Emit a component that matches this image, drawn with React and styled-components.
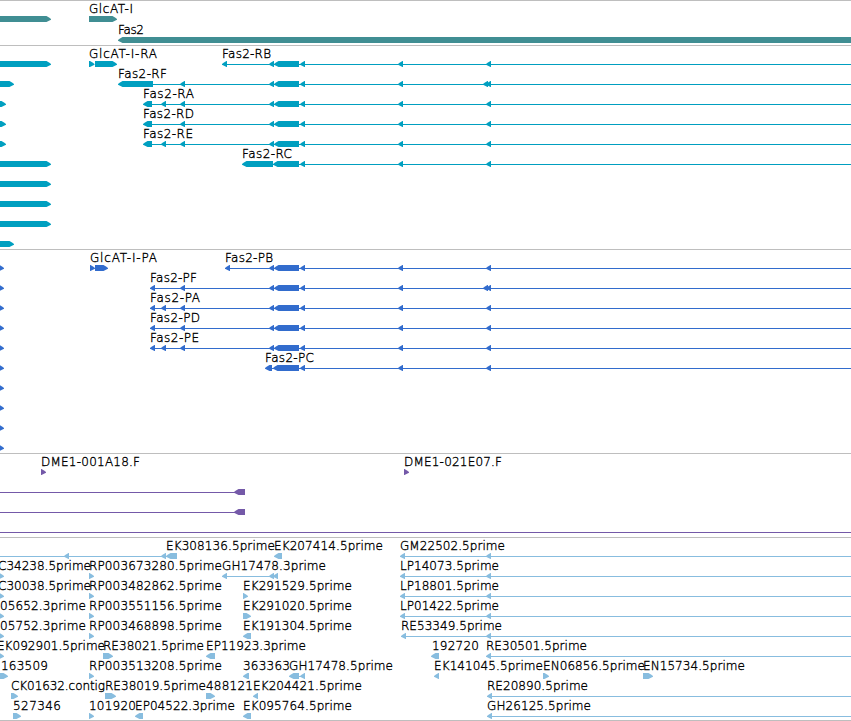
import React from "react";
import styled, { createGlobalStyle } from "styled-components";

const GlobalStyle = createGlobalStyle`
  body { margin: 0; background: #fff; overflow: hidden; }
`;

const Browser = styled.main`
  display: flex;
  flex-direction: column;
  width: 851px;
  height: 721px;
  box-sizing: border-box;
  overflow: hidden;
  background: #fff;
  border-bottom: 1px solid #bebebe;
`;

const Track = styled.section`
  display: flex;
  flex-direction: column;
  flex: none;
  box-sizing: border-box;
  height: ${(p) => p.$height}px;
  border-top: 1px solid #bebebe;
  color: ${(p) => p.$color};
`;

const Lane = styled.svg`
  display: block;
  flex: none;
  width: 851px;
  height: ${(p) => p.$pitch}px;
  overflow: visible;
  fill: currentColor;
`;

const Label = styled.text`
  fill: #000;
  stroke: #000;
  stroke-width: 0.35px;
  font-family: "DejaVu Sans", sans-serif;
  font-weight: 200;
  font-size: 12px;
`;

const TOP = 15;

/* A block [from, to, direction] whose last five pixels taper to a point. */
function Exon({ from, to, dir }) {
  const tip = dir === "r" ? to : from;
  const tail = dir === "r" ? from : to;
  const s = dir === "r" ? -1 : 1;
  const points = [
    [tip, 3],
    [tip + s * 2, 1.4],
    [tip + s * 4.5, 0],
    [tail, 0],
    [tail, 6],
    [tip + s * 4.5, 6],
    [tip + s * 2, 4.8],
    [tip, 3.8],
  ];
  return <polygon points={points.map(([x, y]) => `${x},${y + TOP}`).join(" ")} />;
}

function Row({ pitch, row }) {
  const { labels = [], lines = [], blocks = [] } = row;
  return (
    <Lane $pitch={pitch}>
      {lines.map(([a, b]) => (
        <rect key={a} x={a} y="18" width={b - a} height="1" />
      ))}
      {blocks.map(([a, b, d = "l"]) => (
        <Exon key={a} from={a} to={b} dir={d} />
      ))}
      {labels.map(([text, a, b]) => (
        <Label key={text} x={a} y="12" textLength={b - a} lengthAdjust="spacing">
          {text}
        </Label>
      ))}
    </Lane>
  );
}

const END = 851;
const right = (to) => [-12, to, "r"];
const shared = [[300, 305], [398, 403], [486, 491]];
const core = [[269, 274], [274, 299], ...shared];

const genes = [
  { labels: [["GlcAT-I", 89, 133]], blocks: [right(51), [89, 117, "r"]] },
  { labels: [["Fas2", 118, 144]], blocks: [[118, 870]] },
];

const transcripts = [
  {
    labels: [["GlcAT-I-RA", 89, 157], ["Fas2-RB", 222, 271]],
    lines: [[222, END]],
    blocks: [right(51), [89, 94.5, "r"], [95, 117, "r"], [222, 227], ...core],
  },
  {
    labels: [["Fas2-RF", 118, 167]],
    lines: [[140, END]],
    blocks: [right(14), [118, 153], [180, 185], ...core, [483, 488]],
  },
  {
    labels: [["Fas2-RA", 143, 194]],
    lines: [[146, END]],
    blocks: [right(6), [143, 152], [161, 166], [180, 185], ...core],
  },
  {
    labels: [["Fas2-RD", 143, 194]],
    lines: [[146, END]],
    blocks: [right(6), [143, 152], [180, 185], ...core],
  },
  {
    labels: [["Fas2-RE", 143, 193]],
    lines: [[146, END]],
    blocks: [right(6), [143, 152], [161, 166], [180, 185], ...core],
  },
  {
    labels: [["Fas2-RC", 242, 292]],
    lines: [[260, END]],
    blocks: [right(51), [242, 273], [273, 299], ...shared],
  },
  { blocks: [right(51)] },
  { blocks: [right(51)] },
  { blocks: [right(51)] },
  { blocks: [right(14)] },
];

const proteins = [
  {
    labels: [["GlcAT-I-PA", 90, 157], ["Fas2-PB", 225, 273]],
    lines: [[225, END]],
    blocks: [[-1, 4, "r"], [90, 95, "r"], [95, 108, "r"], [225, 230], ...core],
  },
  {
    labels: [["Fas2-PF", 150, 197]],
    lines: [[150, END]],
    blocks: [[-1, 4, "r"], [150, 155], [180, 185], ...core, [483, 488]],
  },
  {
    labels: [["Fas2-PA", 150, 200]],
    lines: [[150, END]],
    blocks: [[-1, 4, "r"], [150, 155], [161, 166], [180, 185], ...core],
  },
  {
    labels: [["Fas2-PD", 150, 200]],
    lines: [[150, END]],
    blocks: [[-1, 4, "r"], [150, 155], [180, 185], ...core],
  },
  {
    labels: [["Fas2-PE", 150, 199]],
    lines: [[150, END]],
    blocks: [[-1, 4, "r"], [150, 155], [161, 166], [180, 185], ...core],
  },
  {
    labels: [["Fas2-PC", 265, 314]],
    lines: [[268, END]],
    blocks: [[-1, 4, "r"], [265, 272], [273, 299], ...shared],
  },
  { blocks: [[-1, 4, "r"]] },
  { blocks: [[-1, 4, "r"]] },
  { blocks: [[-1, 4, "r"]] },
  { blocks: [[-1, 4, "r"]] },
];

const bacEnds = [
  {
    labels: [["DME1-001A18.F", 41, 140], ["DME1-021E07.F", 404, 502]],
    blocks: [[41, 46, "r"], [404, 409, "r"]],
  },
  { lines: [[0, 240]], blocks: [[234, 245]] },
  { lines: [[0, 240]], blocks: [[234, 245]] },
  { lines: [[0, END]] },
];

const ests = [
  {
    labels: [["EK308136.5prime", 166, 275], ["EK207414.5prime", 274, 383], ["GM22502.5prime", 400, 505]],
    lines: [[0, 170], [400, END]],
    blocks: [[64, 69], [161, 166], [166, 177], [274, 282], [400, 405], [486, 491]],
  },
  {
    labels: [["C34238.5prime", -2, 91], ["RP003673280.5prime", 89, 222], ["GH17478.3prime", 222, 326], ["LP14073.5prime", 400, 499]],
    lines: [[222, 275], [400, END]],
    blocks: [[-1, 4, "r"], [89, 94, "r"], [222, 227], [269, 274], [273, 278], [400, 405], [486, 491]],
  },
  {
    labels: [["C30038.5prime", -2, 91], ["RP003482862.5prime", 89, 222], ["EK291529.5prime", 243, 352], ["LP18801.5prime", 400, 499]],
    lines: [[400, END]],
    blocks: [[-1, 4, "r"], [89, 94, "r"], [243, 248, "r"], [400, 405], [486, 491]],
  },
  {
    labels: [["05652.3prime", 0, 86], ["RP003551156.5prime", 89, 222], ["EK291020.5prime", 243, 352], ["LP01422.5prime", 400, 499]],
    lines: [[400, END]],
    blocks: [[-1, 4, "r"], [89, 94, "r"], [243, 251, "r"], [400, 405], [486, 491]],
  },
  {
    labels: [["05752.3prime", 0, 86], ["RP003468898.5prime", 89, 222], ["EK191304.5prime", 243, 352], ["RE53349.5prime", 401, 502]],
    lines: [[401, END]],
    blocks: [[-1, 4, "r"], [89, 94, "r"], [243, 251], [401, 406], [486, 491]],
  },
  {
    labels: [["EK092901.5prime", -3, 105], ["RE38021.5prime", 103, 204], ["EP11923.3prime", 206, 306], ["192720", 432, 479], ["RE30501.5prime", 486, 587]],
    lines: [[486, END]],
    blocks: [[-1, 4, "r"], [103, 113, "r"], [206, 215], [431, 439], [486, 491]],
  },
  {
    labels: [["163509", 1, 48], ["RP003513208.5prime", 89, 222], ["363363", 243, 290], ["GH17478.5prime", 289, 393], ["EK141045.5prime", 434, 543], ["EN06856.5prime", 543, 645], ["EN15734.5prime", 643, 745]],
    lines: [[292, 302]],
    blocks: [[0, 8, "r"], [89, 94, "r"], [243, 249], [289, 299], [300, 305], [434, 439], [543, 549, "r"], [643, 653, "r"]],
  },
  {
    labels: [["CK01632.contig", 11, 105], ["RE38019.5prime", 105, 206], ["488121", 206, 253], ["EK204421.5prime", 253, 362], ["RE20890.5prime", 487, 588]],
    lines: [[487, END]],
    blocks: [[11, 18, "r"], [105, 116, "r"], [206, 215, "r"], [253, 258], [487, 492]],
  },
  {
    labels: [["527346", 13, 61], ["101920", 89, 136], ["EP04522.3prime", 135, 235], ["EK095764.5prime", 243, 352], ["GH26125.5prime", 487, 591]],
    lines: [[487, END]],
    blocks: [[13, 21, "r"], [89, 94, "r"], [135, 143], [243, 251], [487, 492]],
  },
];

const tracks = [
  { name: "genes", color: "#408e93", height: 45, pitch: 21, rows: genes },
  { name: "transcripts", color: "#009fc0", height: 204, pitch: 20, rows: transcripts },
  { name: "proteins", color: "#326ccd", height: 204, pitch: 20, rows: proteins },
  { name: "bacEnds", color: "#7459a8", height: 84, pitch: 20, rows: bacEnds },
  { name: "ests", color: "#88bddf", height: 183, pitch: 20, rows: ests },
];

export default function App() {
  return (
    <>
      <GlobalStyle />
      <Browser>
        {tracks.map((t) => (
          <Track key={t.name} $color={t.color} $height={t.height}>
            {t.rows.map((row, i) => (
              <Row key={i} pitch={t.pitch} row={row} />
            ))}
          </Track>
        ))}
      </Browser>
    </>
  );
}
